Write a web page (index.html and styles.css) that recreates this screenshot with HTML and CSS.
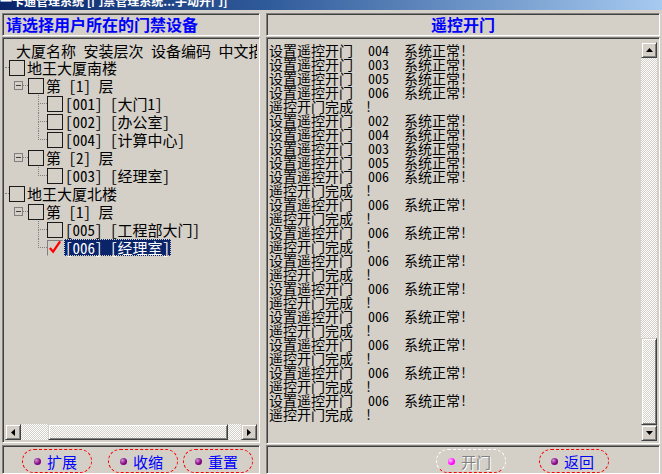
FILE: index.html
```html
<!DOCTYPE html>
<html lang="zh-CN">
<head>
    <meta charset="UTF-8">
    <title>一卡通管理系统 [门禁管理系统...手动开门]</title>
    <link rel="stylesheet" href="styles.css">
</head>
<body>
    <div class="titlebar"><span>一卡通管理系统 [门禁管理系统...手动开门]</span></div>

    <div class="panes">
        <!-- Device tree -->
        <div class="pane left">
            <div class="pane-head sunken"><h2>请选择用户所在的门禁设备</h2></div>
            <div class="tree sunken">
                <div class="tree-body">
                    <div class="tree-cols">大厦名称 安装层次 设备编码 中文描述</div>

                    <div class="node lv1"><span class="stub"></span><span class="cb"></span><span class="label">地王大厦南楼</span></div>
                    <div class="node lv2"><span class="exp"></span><span class="dash"></span><span class="cb"></span><span class="label">第 [1] 层</span></div>
                    <div class="node lv3"><span class="conn"><i></i><i></i></span><span class="cb"></span><span class="label">[001] [大门1]</span></div>
                    <div class="node lv3"><span class="conn"><i></i><i></i></span><span class="cb"></span><span class="label">[002] [办公室]</span></div>
                    <div class="node lv3 last"><span class="conn"><i></i><i></i></span><span class="cb"></span><span class="label">[004] [计算中心]</span></div>
                    <div class="node lv2"><span class="exp"></span><span class="dash"></span><span class="cb"></span><span class="label">第 [2] 层</span></div>
                    <div class="node lv3 last"><span class="conn"><i></i><i></i></span><span class="cb"></span><span class="label">[003] [经理室]</span></div>

                    <div class="node lv1"><span class="stub"></span><span class="cb"></span><span class="label">地王大厦北楼</span></div>
                    <div class="node lv2"><span class="exp"></span><span class="dash"></span><span class="cb"></span><span class="label">第 [1] 层</span></div>
                    <div class="node lv3"><span class="conn"><i></i><i></i></span><span class="cb"></span><span class="label">[005] [工程部大门]</span></div>
                    <div class="node lv3 last sel">
                        <span class="conn"><i></i><i></i></span>
                        <span class="cb checked"><svg width="15" height="15" viewBox="0 0 15 15"><path d="M2 8 L5.5 12 L13 1" fill="none" stroke="#ff0000" stroke-width="2.4"/></svg></span>
                        <span class="label">[006] [经理室]</span>
                    </div>
                </div>
                <div class="hscroll">
                    <span class="sbtn raised"><svg width="4" height="7" viewBox="0 0 4 7"><path d="M4 0 L0 3.5 L4 7 Z"/></svg></span>
                    <div class="htrack"><span class="thumb raised"></span></div>
                    <span class="sbtn raised"><svg width="4" height="7" viewBox="0 0 4 7"><path d="M0 0 L4 3.5 L0 7 Z"/></svg></span>
                </div>
            </div>
            <div class="foot sunken">
                <span class="btn"><span class="dot"></span>扩展</span>
                <span class="btn gap1"><span class="dot"></span>收缩</span>
                <span class="btn gap2"><span class="dot"></span>重置</span>
            </div>
        </div>

        <div class="divider"></div>

        <!-- Remote open log -->
        <div class="pane right">
            <div class="pane-head sunken"><h2>遥控开门</h2></div>
            <div class="list sunken">
                <div class="log">
                    <div class="line"><span class="c1">设置遥控开门</span><span class="c2">004</span><span>系统正常!</span></div>
                    <div class="line"><span class="c1">设置遥控开门</span><span class="c2">003</span><span>系统正常!</span></div>
                    <div class="line"><span class="c1">设置遥控开门</span><span class="c2">005</span><span>系统正常!</span></div>
                    <div class="line"><span class="c1">设置遥控开门</span><span class="c2">006</span><span>系统正常!</span></div>
                    <div class="line done"><span class="c1">遥控开门完成</span><span>!</span></div>
                    <div class="line"><span class="c1">设置遥控开门</span><span class="c2">002</span><span>系统正常!</span></div>
                    <div class="line"><span class="c1">设置遥控开门</span><span class="c2">004</span><span>系统正常!</span></div>
                    <div class="line"><span class="c1">设置遥控开门</span><span class="c2">003</span><span>系统正常!</span></div>
                    <div class="line"><span class="c1">设置遥控开门</span><span class="c2">005</span><span>系统正常!</span></div>
                    <div class="line"><span class="c1">设置遥控开门</span><span class="c2">006</span><span>系统正常!</span></div>
                    <div class="line done"><span class="c1">遥控开门完成</span><span>!</span></div>
                    <div class="line"><span class="c1">设置遥控开门</span><span class="c2">006</span><span>系统正常!</span></div>
                    <div class="line done"><span class="c1">遥控开门完成</span><span>!</span></div>
                    <div class="line"><span class="c1">设置遥控开门</span><span class="c2">006</span><span>系统正常!</span></div>
                    <div class="line done"><span class="c1">遥控开门完成</span><span>!</span></div>
                    <div class="line"><span class="c1">设置遥控开门</span><span class="c2">006</span><span>系统正常!</span></div>
                    <div class="line done"><span class="c1">遥控开门完成</span><span>!</span></div>
                    <div class="line"><span class="c1">设置遥控开门</span><span class="c2">006</span><span>系统正常!</span></div>
                    <div class="line done"><span class="c1">遥控开门完成</span><span>!</span></div>
                    <div class="line"><span class="c1">设置遥控开门</span><span class="c2">006</span><span>系统正常!</span></div>
                    <div class="line done"><span class="c1">遥控开门完成</span><span>!</span></div>
                    <div class="line"><span class="c1">设置遥控开门</span><span class="c2">006</span><span>系统正常!</span></div>
                    <div class="line done"><span class="c1">遥控开门完成</span><span>!</span></div>
                    <div class="line"><span class="c1">设置遥控开门</span><span class="c2">006</span><span>系统正常!</span></div>
                    <div class="line done"><span class="c1">遥控开门完成</span><span>!</span></div>
                    <div class="line"><span class="c1">设置遥控开门</span><span class="c2">006</span><span>系统正常!</span></div>
                    <div class="line done"><span class="c1">遥控开门完成</span><span>!</span></div>
                </div>
                <div class="vscroll">
                    <span class="sbtn raised"><svg width="7" height="4" viewBox="0 0 7 4"><path d="M0 4 L3.5 0 L7 4 Z"/></svg></span>
                    <div class="vtrack"><span class="thumb raised"></span></div>
                    <span class="sbtn raised"><svg width="7" height="4" viewBox="0 0 7 4"><path d="M0 0 L3.5 4 L7 0 Z"/></svg></span>
                </div>
            </div>
            <div class="foot sunken">
                <span class="btn disabled"><span class="dot"></span>开门</span>
                <span class="btn gap3"><span class="dot"></span>返回</span>
            </div>
        </div>
    </div>
</body>
</html>
```

FILE: styles.css
```css
* {
    box-sizing: border-box;
}

html, body {
    margin: 0;
    padding: 0;
}

body {
    width: 662px;
    height: 474px;
    overflow: hidden;
    background: #d4d0c8;
    color: #000;
    font-family: "Noto Sans CJK SC", "Noto Sans", sans-serif;
}

/* Window chrome */
.titlebar {
    height: 10px;
    overflow: hidden;
    background: linear-gradient(to right, #0a246a 0%, #2f5a9a 40%, #a6caf0 100%);
    color: #fff;
    font-size: 12px;
    font-weight: bold;
    line-height: 12px;
    white-space: nowrap;
}

.titlebar span {
    display: block;
    margin-top: -5px;
}

.sunken {
    border: 1px solid;
    border-color: #808080 #fff #fff #808080;
    box-shadow: inset 1px 1px #404040, inset -1px -1px #d4d0c8;
}

.raised {
    border: 1px solid;
    border-color: #d4d0c8 #404040 #404040 #d4d0c8;
    box-shadow: inset 1px 1px #fff, inset -1px -1px #808080;
}

.panes {
    display: flex;
    height: 464px;
    padding-top: 3px;
}

.pane {
    display: flex;
    flex-direction: column;
}

.left {
    width: 258px;
    margin-left: 2px;
}

.divider {
    width: 6px;
}

.right {
    width: 394px;
}

.pane-head {
    height: 23px;
    display: flex;
    align-items: center;
    padding-left: 3px;
}

.pane-head h2 {
    margin: 0;
    font-size: 16px;
    font-weight: bold;
    line-height: 1;
    color: #0000ff;
    white-space: nowrap;
}

.right .pane-head {
    justify-content: center;
    padding-left: 0;
}

/* Tree */
.tree {
    margin-top: 1px;
    height: 409px;
    padding: 2px;
    display: flex;
    flex-direction: column;
}

.tree-body {
    flex: 1;
    overflow: hidden;
    padding-top: 2px;
    font-family: "Noto Sans Mono CJK SC", "Noto Sans CJK SC", monospace;
    font-size: 15px;
}

.tree-cols {
    height: 17px;
    line-height: 17px;
    padding-left: 11px;
    white-space: pre;
}

.node {
    display: flex;
    align-items: center;
    height: 18px;
    white-space: pre;
    line-height: 17px;
}

.lv2 {
    padding-left: 9px;
}

.lv3 {
    padding-left: 33px;
}

.stub {
    width: 4px;
    border-top: 1px dotted #808080;
}

.exp {
    width: 9px;
    height: 9px;
    flex: none;
    border: 1px solid #808080;
    display: flex;
    align-items: center;
    justify-content: center;
}

.exp::before {
    content: "";
    width: 5px;
    height: 1px;
    background: #404040;
}

.dash {
    width: 5px;
    border-top: 1px dotted #808080;
}

.conn {
    width: 9px;
    align-self: stretch;
    display: flex;
    flex-direction: column;
}

.conn i {
    flex: 1;
    border-left: 1px dotted #808080;
}

.conn i:first-child {
    border-bottom: 1px dotted #808080;
}

.last .conn i:last-child {
    border-left: none;
}

.cb {
    width: 16px;
    height: 16px;
    flex: none;
    border: 1px solid #1a1a1a;
}

.cb.checked {
    border-color: #808080 #d4d0c8 #d4d0c8 #808080;
    display: flex;
    align-items: center;
    justify-content: center;
}

.label {
    margin-left: 2px;
}

.sel .label {
    margin-left: 1px;
    padding: 0 1px;
    background: #0a246a;
    color: #fff;
    outline: 1px dotted #d4d0c8;
    outline-offset: -1px;
}

/* Scroll bars */
.sbtn {
    width: 16px;
    height: 16px;
    flex: none;
    display: flex;
    align-items: center;
    justify-content: center;
}

.hscroll {
    height: 16px;
    display: flex;
}

.htrack {
    flex: 1;
    display: flex;
    padding-left: 27px;
    background: repeating-conic-gradient(#fff 0 25%, #d4d0c8 0 50%) 0 0 / 2px 2px;
}

.htrack .thumb {
    width: 180px;
    height: 16px;
}

.vscroll {
    width: 16px;
    display: flex;
    flex-direction: column;
    padding-top: 2px;
}

.vtrack {
    flex: 1;
    display: flex;
    flex-direction: column;
    justify-content: flex-end;
    background: repeating-conic-gradient(#fff 0 25%, #d4d0c8 0 50%) 0 0 / 2px 2px;
}

.vtrack .thumb {
    height: 87px;
}

/* Log list */
.list {
    margin-top: 1px;
    height: 408px;
    padding: 2px;
    display: flex;
}

.log {
    flex: 1;
    overflow: hidden;
    padding-top: 3px;
    font-family: "Noto Sans Mono CJK SC", "Noto Sans CJK SC", monospace;
    font-size: 14px;
    line-height: 14px;
    white-space: nowrap;
}

.line {
    display: flex;
    height: 14px;
}

.c1 {
    width: 99px;
}

.done .c1 {
    width: 96px;
}

.c2 {
    width: 36px;
}

/* Footer buttons */
.foot {
    flex: 1;
    margin-top: 2px;
    padding: 3px 0 0 19px;
    display: flex;
    align-items: flex-start;
}

.right .foot {
    margin-top: 1px;
    padding-left: 169px;
}

.btn {
    width: 70px;
    height: 24px;
    flex: none;
    display: flex;
    align-items: center;
    gap: 6px;
    padding-left: 11px;
    border: 1px dashed #ff0000;
    border-radius: 12px;
    font-size: 15px;
    color: #0000ff;
}

.btn .dot {
    width: 7px;
    height: 7px;
    border-radius: 50%;
    background: radial-gradient(circle at 35% 35%, #d090d0 0, #800080 60%);
}

.gap1 {
    margin-left: 16px;
}

.gap2 {
    margin-left: 5px;
}

.gap3 {
    margin-left: 33px;
}

.btn.disabled {
    border-color: #fff #fff #ff0000 #fff;
    color: #808080;
    text-shadow: 1px 1px #fff;
}

.btn.disabled .dot {
    background: radial-gradient(circle at 35% 35%, #ffc0ff 0, #ff00ff 60%);
}
```
